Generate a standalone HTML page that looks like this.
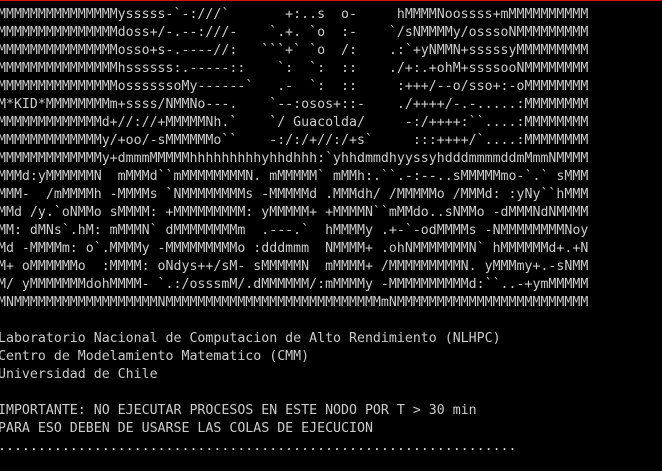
<!DOCTYPE html>
<html><head><meta charset="utf-8">
<style>
html,body{margin:0;padding:0;background:#000;width:662px;height:471px;overflow:hidden;}
#bar{position:absolute;left:0;top:0;width:662px;height:1px;background:#e01010;}
pre{position:absolute;left:-2px;top:6px;margin:0;font-family:"DejaVu Sans Mono","Liberation Mono",monospace;font-size:13.25px;line-height:18px;color:#cccccc;white-space:pre;}
</style></head><body>
<div id="bar"></div>
<pre>MMMMMMMMMMMMMMMysssss-&#96;-:///&#96;       +:..s  o-     hMMMMNoossss+mMMMMMMMMMM
MMMMMMMMMMMMMMMdoss+/-.--:///-    &#96;.+. &#96;o  :-    &#96;/sNMMMMy/osssoNMMMMMMMMM
MMMMMMMMMMMMMMMosso+s-.----//:   &#96;&#96;&#96;+&#96; &#96;o  /:    .:&#96;+yNMMN+sssssyMMMMMMMMM
MMMMMMMMMMMMMMMhssssss:.-----::    &#96;:  &#96;:  ::    ./+:.+ohM+ssssooNMMMMMMMM
MMMMMMMMMMMMMMMossssssoMy------&#96;   .-  &#96;:  ::     :+++/--o/sso+:-oMMMMMMMM
M*KID*MMMMMMMMm+ssss/NMMNo---.    &#96;--:osos+::-    ./++++/-.-.....:MMMMMMMM
MMMMMMMMMMMMMd+//://+MMMMMNh.&#96;    &#96;/ Guacolda/     -:/++++:&#96;&#96;....:MMMMMMMM
MMMMMMMMMMMMMy/+oo/-sMMMMMMo&#96;&#96;    -:/:/+//:/+s&#96;     :::++++/&#96;....:MMMMMMMM
MMMMMMMMMMMMMy+dmmmMMMMMhhhhhhhhhyhhdhhh:&#96;yhhdmmdhyyssyhdddmmmmddmMmmNMMMM
MMMd:yMMMMMMN  mMMMd&#96;&#96;mMMMMMMMMN. mMMMMM&#96; mMMh:.&#96;&#96;.-:--..sMMMMMmo-&#96;.&#96; sMMM
MMM-  /mMMMMh -MMMMs &#96;NMMMMMMMMs -MMMMMd .MMMdh/ /MMMMMo /MMMd: :yNy&#96;&#96;hMMM
MMd /y.&#96;oNMMo sMMMM: +MMMMMMMMM: yMMMMM+ +MMMMN&#96;&#96;mMMdo..sNMMo -dMMMNdNMMMM
MM: dMNs&#96;.hM: mMMMN&#96; dMMMMMMMMm  .---.&#96;  hMMMMy .+-&#96;-odMMMMs -NMMMMMMMMNoy
Md -MMMMm: o&#96;.MMMMy -MMMMMMMMMo :dddmmm  NMMMM+ .ohNMMMMMMMN&#96; hMMMMMMd+.+N
M+ oMMMMMMo  :MMMM: oNdys++/sM- sMMMMMN  mMMMM+ /MMMMMMMMMN. yMMMmy+.-sNMM
M/ yMMMMMMMdohMMMM- &#96;.:/osssmM/.dMMMMMM/:mMMMMy -MMMMMMMMMMd:&#96;&#96;..-+ymMMMMM
MNMMMMMMMMMMMMMMMMMMNMMMMMMMMMMMMMMMMMMMMMMMMMMMmNMMMMMMMMMMMMMMMMMMMMMMMM

Laboratorio Nacional de Computacion de Alto Rendimiento (NLHPC)
Centro de Modelamiento Matematico (CMM)
Universidad de Chile

IMPORTANTE: NO EJECUTAR PROCESOS EN ESTE NODO POR T &gt; 30 min
PARA ESO DEBEN DE USARSE LAS COLAS DE EJECUCION
.................................................................</pre>
</body></html>
